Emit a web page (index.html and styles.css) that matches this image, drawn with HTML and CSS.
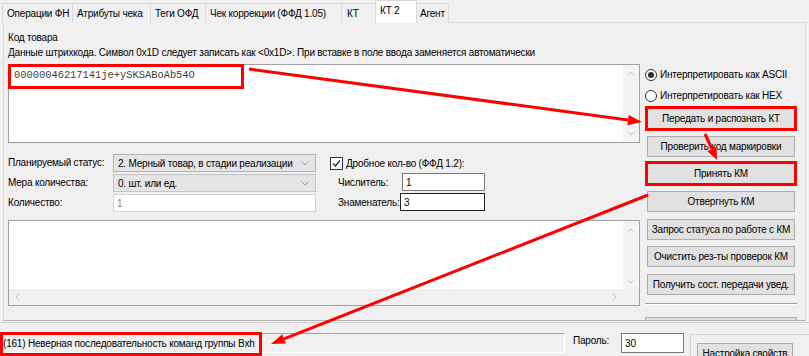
FILE: index.html
```html
<!DOCTYPE html>
<html lang="ru">
<head>
  <meta charset="UTF-8" />
  <title>КТ 2</title>
  <link rel="stylesheet" href="styles.css">
</head>
<body>
<div class="window">

  <div class="tabs">
    <div class="tab">Операции ФН</div>
    <div class="tab">Атрибуты чека</div>
    <div class="tab">Теги ОФД</div>
    <div class="tab">Чек коррекции (ФФД 1.05)</div>
    <div class="tab">КТ</div>
    <div class="tab active">КТ 2</div>
    <div class="tab">Агент</div>
  </div>

  <div class="page">
    <div class="left">
      <div class="caption">Код товара</div>
      <div class="caption">Данные штрихкода. Символ 0x1D следует записать как &lt;0x1D&gt;. При вставке в поле ввода заменяется автоматически</div>

      <div class="memo memo-code">
        <div class="memo-body"><span class="code-mark">00000046217141je+ySKSABoAb54O</span></div>
        <div class="vscroll">
          <svg width="8" height="5" viewBox="0 0 8 5"><polyline points="0.5,4.5 4,1 7.5,4.5" /></svg>
          <svg width="8" height="5" viewBox="0 0 8 5"><polyline points="0.5,0.5 4,4 7.5,0.5" /></svg>
        </div>
      </div>

      <div class="fields">
        <div class="field-grid">
          <label class="field-label">Планируемый статус:</label>
          <select class="combo combo-status">
            <option>2. Мерный товар, в стадии реализации</option>
          </select>
          <label class="field-label">Мера количества:</label>
          <select class="combo">
            <option>0. шт. или ед.</option>
          </select>
          <label class="field-label">Количество:</label>
          <input class="edit edit-disabled" type="text" value="1" disabled>
        </div>

        <div class="frac">
          <div class="check-row">
            <span class="checkbox">
              <svg width="11" height="11" viewBox="0 0 11 11"><polyline points="2,5.5 4.5,8 9,2.5" /></svg>
            </span>
            <span>Дробное кол-во (ФФД 1.2):</span>
          </div>
          <div class="frac-row">
            <label class="frac-label">Числитель:</label>
            <input class="edit edit-num" type="text" value="1">
          </div>
          <div class="frac-row">
            <label class="frac-label">Знаменатель:</label>
            <input class="edit edit-focus" type="text" value="3">
          </div>
        </div>
      </div>

      <div class="memo memo-log">
        <div class="memo-body"></div>
        <div class="vscroll">
          <svg width="8" height="5" viewBox="0 0 8 5"><polyline points="0.5,4.5 4,1 7.5,4.5" /></svg>
          <svg width="8" height="5" viewBox="0 0 8 5"><polyline points="0.5,0.5 4,4 7.5,0.5" /></svg>
        </div>
        <div class="hscroll">
          <svg width="5" height="8" viewBox="0 0 5 8"><polyline points="4.5,0.5 1,4 4.5,7.5" /></svg>
          <svg width="5" height="8" viewBox="0 0 5 8"><polyline points="0.5,0.5 4,4 0.5,7.5" /></svg>
        </div>
        <div class="corner"></div>
      </div>
    </div>

    <div class="right">
      <div class="radio-row"><span class="radio checked"></span>Интерпретировать как ASCII</div>
      <div class="radio-row"><span class="radio"></span>Интерпретировать как HEX</div>

      <div class="buttons">
        <button class="btn marked">Передать и распознать КТ</button>
        <button class="btn">Проверить код маркировки</button>
        <button class="btn marked">Принять КМ</button>
        <button class="btn">Отвергнуть КМ</button>
        <button class="btn">Запрос статуса по работе с КМ</button>
        <button class="btn">Очистить рез-ты проверок КМ</button>
        <button class="btn">Получить сост. передачи увед.</button>
      </div>
      <div class="separator"></div>
      <button class="btn btn-cut"></button>
    </div>
  </div>

  <div class="statusbar">
    <div class="status-field">
      <span class="status-text">(161) Неверная последовательность команд группы Bxh</span>
    </div>
    <label class="pass-label">Пароль:</label>
    <input class="edit edit-pass" type="text" value="30">
    <div class="settings">
      <button class="btn btn-settings">Настройка свойств</button>
    </div>
  </div>

  <!-- red annotation arrows -->
  <svg class="arrows" width="809" height="356" viewBox="0 0 809 356">
    <line x1="249" y1="69" x2="628" y2="120" />
    <polygon points="642,122 627.4,125.2 628.8,115" />
    <line x1="705" y1="134" x2="712" y2="149" />
    <polygon points="717,160 707.5,151.2 716.5,147" />
    <line x1="648" y1="195" x2="284" y2="338.8" />
    <polygon points="271,344 282.2,334.2 285.8,343.5" />
  </svg>

</div>
</body>
</html>
```

FILE: styles.css
```css
* {
  box-sizing: border-box;
}

body {
  margin: 0;
  background-color: #f0f0f0;
  font-family: "Liberation Sans", Arial, sans-serif;
  font-size: 10px;
  letter-spacing: -0.2px;
  color: #000;
}

.window {
  position: relative;
  width: 809px;
  height: 356px;
  overflow: hidden;
}

/* tab strip */
.tabs {
  display: flex;
  align-items: flex-end;
  height: 23px;
  padding-left: 2px;
}

.tab {
  height: 20px;
  line-height: 19px;
  padding: 0 0 0 4px;
  margin-right: -1px;
  border: 1px solid #d9d9d9;
  border-bottom: none;
  background-color: #f0f0f0;
  white-space: nowrap;
}

.tab:nth-child(1) { width: 71px; }
.tab:nth-child(2) { width: 79px; }
.tab:nth-child(3) { width: 56px; }
.tab:nth-child(4) { width: 137px; }
.tab:nth-child(5) { width: 36px; padding-left: 5px; }
.tab:nth-child(7) { width: 34px; }

.tab.active {
  position: relative;
  z-index: 1;
  width: 42px;
  height: 23px;
  line-height: 19px;
  padding-left: 4px;
  margin: 0 -2px 0 -1px;
  background-color: #fff;
}

.page {
  display: flex;
  gap: 5px;
  height: 299px;
  margin: -1px 3px 0;
  padding: 8px 0 0 4px;
  border: 1px solid #d9d9d9;
  border-bottom-color: #b4b4b4;
  background-color: #f0f0f0;
  overflow: hidden;
}

.left {
  width: 632px;
  display: flex;
  flex-direction: column;
}

.left > *,
.right > * {
  flex-shrink: 0;
}

.caption {
  line-height: 14px;
  white-space: nowrap;
}
.caption + .caption {
  margin-top: 1px;
}

/* memo boxes */
.memo {
  display: flex;
  border: 1px solid #a0a0a0;
  background-color: #fff;
}

.memo-body {
  flex: 1;
}

.vscroll {
  width: 16px;
  display: flex;
  flex-direction: column;
  justify-content: space-between;
  align-items: center;
  padding: 6px 0;
  background-color: #f4f4f4;
}

.vscroll svg polyline,
.hscroll svg polyline {
  fill: none;
  stroke: #c2c2c2;
  stroke-width: 1;
}

.memo-code {
  height: 79px;
  margin-top: 4px;
}

.code-mark {
  display: inline-block;
  width: 236px;
  height: 25px;
  margin: -1px 0 0 -1px;
  padding-left: 3px;
  border: 3px solid #f00;
  font-family: "Liberation Mono", "Courier New", monospace;
  font-size: 10.4px;
  letter-spacing: 0;
  line-height: 16px;
  color: #3c3c3c;
  white-space: nowrap;
}

.memo-log {
  display: grid;
  grid-template-columns: 1fr 16px;
  grid-template-rows: 1fr 16px;
  height: 86px;
  margin-top: 8px;
}

.memo-log .vscroll {
  padding: 7px 0 5px;
}

.hscroll {
  display: flex;
  justify-content: space-between;
  align-items: center;
  padding: 0 6px 0 6px;
  background-color: #f0f0f0;
}

.corner {
  background-color: #f0f0f0;
}

/* fields */
.fields {
  display: flex;
  margin-top: 11px;
}

.field-grid {
  display: grid;
  grid-template-columns: 105px 203px;
  grid-auto-rows: 18px;
  row-gap: 2px;
}

.field-label {
  line-height: 18px;
  white-space: nowrap;
}

.combo {
  appearance: none;
  height: 18px;
  padding: 0 4px;
  border: 1px solid #c4c4c4;
  border-radius: 0;
  background: #e5e5e5 url("data:image/svg+xml,%3csvg xmlns='http://www.w3.org/2000/svg' width='8' height='5'%3e%3cpolyline points='0.5,0.5 4,4 7.5,0.5' fill='none' stroke='%23999'/%3e%3c/svg%3e") no-repeat right 6px center;
  font-family: inherit;
  font-size: 10px;
  letter-spacing: -0.2px;
  color: #000;
}

.combo-status {
  border-color: #b4b4b4;
}

.edit {
  height: 18px;
  padding: 0 3px;
  border: 1px solid #7a7a7a;
  border-radius: 0;
  background-color: #fff;
  font-family: inherit;
  font-size: 10px;
  color: #000;
}

.edit-disabled {
  border-color: #d2d2d2;
  color: #8a8a8a;
}

.edit-focus {
  border-color: #222;
}

.frac {
  margin-left: 14px;
  display: flex;
  flex-direction: column;
}

.check-row {
  display: flex;
  align-items: center;
  gap: 3px;
  height: 19px;
}

.checkbox {
  display: inline-flex;
  align-items: center;
  justify-content: center;
  width: 13px;
  height: 13px;
  border: 1px solid #333;
  background-color: #fff;
}

.checkbox polyline {
  fill: none;
  stroke: #222;
  stroke-width: 1.2;
}

.frac-row {
  display: flex;
  align-items: center;
  height: 18px;
}
.frac-row + .frac-row {
  margin-top: 2px;
}

.frac-label {
  width: 70px;
  padding-left: 8px;
  white-space: nowrap;
}

.edit-num {
  width: 83px;
  margin-left: 2px;
}

.edit-focus {
  width: 85px;
}

/* right column */
.right {
  width: 152px;
  margin-top: 33px;
  display: flex;
  flex-direction: column;
}

.radio-row {
  display: flex;
  align-items: center;
  gap: 3px;
  height: 21px;
  white-space: nowrap;
}

.radio {
  flex-shrink: 0;
  width: 12px;
  height: 12px;
  border: 1px solid #333;
  border-radius: 50%;
  background-color: #fff;
  display: inline-flex;
  align-items: center;
  justify-content: center;
}

.radio.checked::after {
  content: "";
  width: 6px;
  height: 6px;
  border-radius: 50%;
  background-color: #333;
}

.buttons {
  display: flex;
  flex-direction: column;
  gap: 6.67px;
  margin-top: 2px;
}

.btn {
  flex-shrink: 0;
  width: 148px;
  height: 21px;
  margin: 0 2px;
  padding: 0;
  border: 1px solid #adadad;
  border-radius: 0;
  background-color: #e1e1e1;
  font-family: inherit;
  font-size: 10px;
  letter-spacing: -0.2px;
  color: #000;
  white-space: nowrap;
}

.btn.marked {
  outline: 3px solid #f00;
  outline-offset: -1px;
}

.separator {
  margin-top: 8px;
  height: 2px;
  border-top: 1px solid #a0a0a0;
  border-bottom: 1px solid #fff;
}

.btn-cut {
  width: 152px;
  margin: 12px 0 0;
}

/* status bar */
.statusbar {
  display: flex;
  align-items: flex-start;
  margin-top: 1px;
  padding-top: 10px;
  border-top: 1px solid #d2d2d2;
  height: 35px;
}

.status-field {
  width: 565px;
  height: 20px;
  border: 1px solid;
  border-color: #a0a0a0 #fff #fff #a0a0a0;
}

.status-text {
  display: block;
  width: 262px;
  height: 24px;
  margin: -2px 0 0 -1px;
  border: 3px solid #f00;
  line-height: 17px;
  white-space: nowrap;
}

.pass-label {
  width: 48px;
  margin-left: 8px;
  line-height: 16px;
}

.edit-pass {
  width: 63px;
  height: 20px;
}

.settings {
  flex: 1;
  height: 40px;
  margin: 1px 0 0 6px;
  padding: 8px 0 0 6px;
  border-top: 1px solid #d2d2d2;
  border-left: 1px solid #d2d2d2;
}

.btn-settings {
  width: 96px;
  margin: 0;
}

.arrows {
  position: absolute;
  top: 0;
  left: 0;
  z-index: 5;
  pointer-events: none;
}

.arrows line {
  stroke: #f00;
  stroke-width: 3;
}

.arrows polygon {
  fill: #f00;
}
```
